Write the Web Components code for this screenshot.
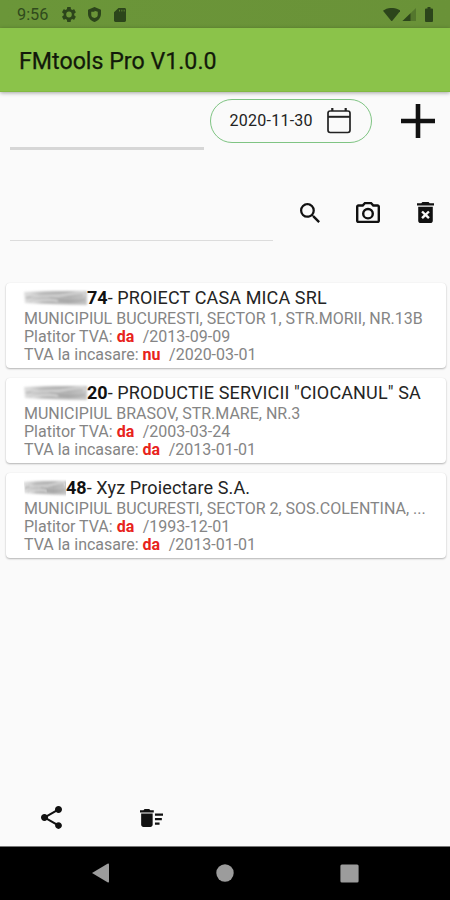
<!DOCTYPE html>
<html lang="ro">
<head>
<meta charset="utf-8">
<title>FMtools Pro</title>
<style>
html,body{margin:0;height:100%;background:#fafafa;font-family:Roboto,"Liberation Sans",sans-serif;color:#111}
</style>
</head>
<body>
<fm-app></fm-app>
<script>
const define = (name, html, setup) => {
  const tpl = document.createElement('template');
  tpl.innerHTML = html;
  customElements.define(name, class extends HTMLElement {
    constructor() {
      super();
      this.attachShadow({mode: 'open'}).append(tpl.content.cloneNode(true));
    }
    connectedCallback() { if (setup) setup(this, this.shadowRoot); }
  });
};

const icons = {
  gear: ['2 2 20 20', '<path fill-rule="evenodd" d="M19.4 13a7.600 7.600 0 0 0 0-2l2.100-1.600c.2-.2.2-.4.1-.7l-2-3.400c-.1-.2-.4-.3-.6-.2l-2.500 1a7.300 7.300 0 0 0-1.700-1L14.400 2.400c0-.2-.2-.4-.5-.4h-4c-.2 0-.4.2-.5.4L9 5.100a7.300 7.300 0 0 0-1.700 1l-2.500-1c-.2-.1-.5 0-.6.2l-2 3.400c-.1.2-.1.5.1.7L4.500 11a7.600 7.600 0 0 0 0 2l-2.200 1.600c-.2.200-.2.400-.1.700l2 3.400c.1.200.4.300.6.200l2.500-1c.5.400 1.100.7 1.700 1l.4 2.700c0 .2.2.4.5.4h4c.2 0 .4-.2.5-.4l.4-2.700a7.300 7.300 0 0 0 1.700-1l2.500 1c.2.100.5 0 .6-.2l2-3.400c.1-.2.1-.5-.1-.7zM12 8a4 4 0 1 1 0 8 4 4 0 0 1 0-8z"/>'],
  shield: ['3 1 18 22', '<path fill-rule="evenodd" d="M12 1 3 5v6c0 5.600 3.800 10.700 9 12 5.200-1.300 9-6.400 9-12V5zM12 6.500l4.500 1.500v4.500a4.500 4.500 0 0 1-9 0V8H12z"/>'],
  sd: ['4 2 16 20', '<path fill-rule="evenodd" d="M18 2h-8L4 8v12c0 1.100.9 2 2 2h12c1.100 0 2-.9 2-2V4c0-1.100-.9-2-2-2zm-6 5h-1V4.500h1zm3 0h-1V4.500h1zm3 0h-1V4.500h1z"/>'],
  wifi: ['0 0 18 14', '<path d="M0 2.800C5-1 13-1 18 2.800L9 14z"/>'],
  signal: ['0 0 14 14', '<path opacity=".35" d="M14 0v14H0z"/><path d="M8.500 5.500V14H0z"/>'],
  battery: ['0 0 8 15', '<path d="M2.500 0h3v1.500H7a1 1 0 0 1 1 1V14a1 1 0 0 1-1 1H1a1 1 0 0 1-1-1V2.500a1 1 0 0 1 1-1h1.500z"/>'],
  calendar: ['0 0 24 27', '<g fill="none" stroke="currentColor"><rect x="1" y="4" width="22" height="21.500" rx="2.200" stroke-width="1.700"/><path d="M1 9.800h22" stroke-width="2"/><path d="M5.300 1v3M18.700 1v3" stroke-width="2.200"/></g>'],
  plus: ['0 0 34 34', '<path d="M14.700 0h4.600v14.700H34v4.600H19.300V34h-4.600V19.300H0v-4.600h14.700z"/>'],
  search: ['3 3 17.500 17.500', '<path d="M15.500 14h-.79l-.28-.27A6.471 6.471 0 0 0 16 9.500 6.500 6.500 0 1 0 9.500 16c1.610 0 3.090-.59 4.230-1.570l.27.28v.79l5 4.990L20.490 19zm-6 0C7.010 14 5 11.990 5 9.500S7.010 5 9.500 5 14 7.010 14 9.500 11.990 14 9.500 14z"/>'],
  camera: ['2 2.500 20 18', '<path d="M14.120 4.500l1.830 2H20v12H4v-12h4.050l1.830-2zM15 2.500H9l-1.830 2H4c-1.100 0-2 .9-2 2v12c0 1.100.9 2 2 2h16c1.100 0 2-.9 2-2v-12c0-1.100-.9-2-2-2h-3.170zM12 9.500a3 3 0 1 1 0 6 3 3 0 0 1 0-6m0-2a5 5 0 1 0 0 10 5 5 0 0 0 0-10z"/>'],
  remove: ['5 3 14 18', '<path fill-rule="evenodd" d="M6 19c0 1.100.9 2 2 2h8c1.100 0 2-.9 2-2V7H6zm2.460-7.120 1.410-1.410L12 12.590l2.120-2.120 1.410 1.410L13.410 14l2.120 2.120-1.410 1.410L12 15.410l-2.120 2.120-1.410-1.410L10.590 14zM15.500 4l-1-1h-5l-1 1H5v2h14V4z"/>'],
  share: ['3 2 18 20', '<path d="M18 16.080c-.76 0-1.440.3-1.960.77L8.910 12.700c.05-.23.09-.46.09-.7s-.04-.47-.09-.7l7.050-4.110c.54.5 1.250.81 2.040.81 1.660 0 3-1.340 3-3s-1.340-3-3-3-3 1.340-3 3c0 .24.04.47.09.7L8.040 9.810C7.500 9.310 6.790 9 6 9c-1.660 0-3 1.340-3 3s1.340 3 3 3c.79 0 1.500-.31 2.040-.81l7.120 4.160c-.05.21-.08.43-.08.65 0 1.610 1.310 2.920 2.920 2.920s2.920-1.310 2.920-2.920-1.310-2.920-2.920-2.920z"/>'],
  sweep: ['2 4 20 16', '<path d="M15 16h4v2h-4zm0-8h7v2h-7zm0 4h6v2h-6zM3 18c0 1.100.9 2 2 2h6c1.100 0 2-.9 2-2V8H3zM14 5h-3l-1-1H6L5 5H2v2h12z"/>'],
  back: ['0 0 17 20', '<path d="M0 10 15.500.8Q17 0 17 1.500v17q0 1.500-1.500.7z"/>'],
  home: ['0 0 18 18', '<circle cx="9" cy="9" r="8.700"/>'],
  recent: ['0 0 19 19', '<rect x=".4" y=".4" width="18.200" height="18.200" rx="1.500"/>']
};

define('fm-icon', `<style>:host{display:block;flex:none}span{display:block;height:100%}svg{display:block;width:100%;height:100%;fill:currentColor}</style><span id="i"></span>`,
  (el, root) => {
    const [box, body] = icons[el.getAttribute('name')];
    el.style.width = el.getAttribute('w') + 'px';
    el.style.height = el.getAttribute('h') + 'px';
    root.querySelector('#i').innerHTML = `<svg viewBox="${box}" preserveAspectRatio="none">${body}</svg>`;
  });

define('fm-status', `<style>
:host{display:flex;align-items:center;box-sizing:border-box;height:28px;padding:1px 17px 0 17px;background:linear-gradient(90deg,#6b9639,#6a9238);color:#2c451b;font-size:16.300px}
.time{width:45px;color:#304a1d}.gap{flex:1}</style>
<span class="time">9:56</span>
<fm-icon name="gear" w="14" h="15"></fm-icon><fm-icon name="shield" w="13" h="15" style="margin-left:12px"></fm-icon><fm-icon name="sd" w="12" h="14" style="margin-left:13px"></fm-icon>
<span class="gap"></span>
<fm-icon name="wifi" w="17.500" h="13.500"></fm-icon><fm-icon name="signal" w="14" h="13.500" style="margin-left:2px"></fm-icon><fm-icon name="battery" w="8" h="15" style="margin-left:9px"></fm-icon>`);

define('fm-title', `<style>
:host{display:flex;align-items:center;box-sizing:border-box;height:64px;padding:3px 19px 0;background:#8bc34a;border-bottom:1px solid #82b942;box-shadow:0 1px 4px rgba(0,0,0,.35);color:#12190a;font-size:23.200px;font-weight:400;-webkit-text-stroke:.25px #12190a;white-space:nowrap;position:relative}
</style><span><slot></slot></span>`);

define('fm-field', `<style>:host{display:block;box-sizing:border-box;border-bottom:var(--line,1px) solid var(--ink,#dcdcdc)}</style>`);

define('fm-date', `<style>
:host{display:flex;align-items:center;box-sizing:border-box;width:162px;height:44px;padding:0 20.500px 1px 18.500px;border:1.500px solid #7fc483;border-radius:22px;color:#222;font-size:16px;letter-spacing:.25px;justify-content:space-between}
</style><span><slot></slot></span><fm-icon name="calendar" w="24" h="27"></fm-icon>`);

define('fm-smudge', `<style>:host{display:inline-block;height:14px;flex:none;align-self:center}svg{display:block;width:100%;height:100%;overflow:visible}</style>
<svg viewBox="0 0 63 14" preserveAspectRatio="none"><defs>
<linearGradient id="g"><stop offset="0" stop-color="#bbb" stop-opacity=".45"/><stop offset=".3" stop-color="#b9b9b9"/><stop offset=".7" stop-color="#b2b2b2"/><stop offset="1" stop-color="#c6c6c6"/></linearGradient>
<filter id="b" x="-10%" y="-20%" width="120%" height="140%"><feGaussianBlur stdDeviation=".8"/></filter></defs>
<g filter="url(#b)"><path fill="url(#g)" d="M0 1 30 0 63 0V14L25 13 1 12z"/>
<path d="M2 7Q16 2 28 7T61 9" fill="none" stroke="#999" stroke-width="1.700" opacity=".6"/>
<path d="M4 4Q28 7 46 3T60 5M8 11Q26 7 34 10" fill="none" stroke="#dedede" stroke-width="1.500"/></g></svg>`);

define('fm-card', `<style>
:host{display:block;box-sizing:border-box;height:85px;padding:4px 18px 0;background:#fff;border-radius:4px;box-shadow:0 1px 2px rgba(0,0,0,.28),0 0 1px rgba(0,0,0,.08);color:#858585;font-size:16px;line-height:18.500px;white-space:nowrap}
.name{display:flex;height:21px;line-height:21px;color:#242424;font-size:18px}
.name b{color:#111}
.n{letter-spacing:.13px}
.addr{height:19.500px;line-height:21px;letter-spacing:-.01px}
em{font-style:normal;font-weight:700;color:#e8231c;margin:0 8.500px 0 0}
</style>
<div class="name"><fm-smudge></fm-smudge><b></b><span class="n"></span></div>
<div class="addr"><slot></slot></div>
<div class="row">Platitor TVA: <em class="p"></em><span class="pd"></span></div>
<div class="row">TVA la incasare: <em class="c"></em><span class="cd"></span></div>`,
  (el, root) => {
    const a = (k) => el.getAttribute(k), put = (s, t) => root.querySelector(s).textContent = t;
    root.querySelector('fm-smudge').style.width = a('blot') + 'px';
    put('b', a('code')); put('.n', '-\u00a0' + a('name'));
    put('.p', a('payer')); put('.pd', '/' + a('payer-date'));
    put('.c', a('cash')); put('.cd', '/' + a('cash-date'));
  });

define('fm-nav', `<style>
:host{display:flex;align-items:center;justify-content:space-between;box-sizing:border-box;height:54px;padding:0 91px 1px 92px;background:#000;border-top:1px solid #777;color:#9c9c9c}
</style><fm-icon name="back" w="17" h="20"></fm-icon><fm-icon name="home" w="18" h="18"></fm-icon><fm-icon name="recent" w="19" h="19"></fm-icon>`);

define('fm-app', `<style>
:host{display:flex;flex-direction:column;height:900px;width:450px;overflow:hidden;background:#fafafa}
.date,.find{display:flex;box-sizing:border-box}
.date{height:59px;padding:7px 15.500px 0 10px;align-items:flex-start}
.date fm-field{width:194px;height:51px;--line:3px;--ink:#d6d6d6;margin-right:6px}
.find{height:92px;padding:0 16.500px 0 10px;align-items:flex-end}
.find fm-field{width:263px;height:40px;margin-right:27px;margin-bottom:2px}
.tools{display:flex;flex:1;justify-content:space-between;align-items:center;height:24px;margin-bottom:18.500px}
.list{display:flex;flex-direction:column;gap:10px;padding:40px 4px 0 6px}
.foot{display:flex;align-items:center;padding:0 0 17px 40.500px;gap:78.500px;margin-top:auto}
</style>
<fm-status></fm-status><fm-title>FMtools Pro V1.0.0</fm-title>
<div class="date"><fm-field></fm-field><fm-date>2020-11-30</fm-date><fm-icon name="plus" w="34" h="34" style="margin:5px 0 0 auto"></fm-icon></div>
<div class="find"><fm-field></fm-field><div class="tools"><fm-icon name="search" w="20" h="20"></fm-icon><fm-icon name="camera" w="24" h="21"></fm-icon><fm-icon name="remove" w="17" h="21"></fm-icon></div></div>
<div class="list">
<fm-card blot="63" code="74" name="PROIECT CASA MICA SRL" payer="da" payer-date="2013-09-09" cash="nu" cash-date="2020-03-01">MUNICIPIUL BUCURESTI, SECTOR 1, STR.MORII, NR.13B</fm-card>
<fm-card blot="63" code="20" name="PRODUCTIE SERVICII &quot;CIOCANUL&quot; SA" payer="da" payer-date="2003-03-24" cash="da" cash-date="2013-01-01">MUNICIPIUL BRASOV, STR.MARE, NR.3</fm-card>
<fm-card blot="42" code="48" name="Xyz Proiectare S.A." payer="da" payer-date="1993-12-01" cash="da" cash-date="2013-01-01">MUNICIPIUL BUCURESTI, SECTOR 2, SOS.COLENTINA, ...</fm-card>
</div>
<div class="foot"><fm-icon name="share" w="21" h="23"></fm-icon><fm-icon name="sweep" w="23" h="18"></fm-icon></div>
<fm-nav></fm-nav>`);
</script>
</body>
</html>
